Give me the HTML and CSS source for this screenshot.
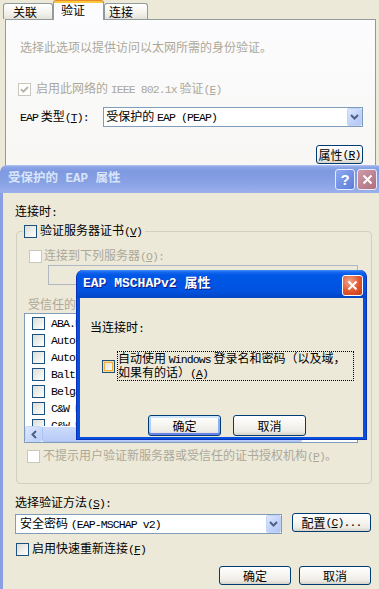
FILE: index.html
```html
<!DOCTYPE html>
<html lang="zh-CN">
<head>
<meta charset="utf-8">
<title>受保护的 EAP 属性</title>
<link rel="stylesheet" href="styles.css">
</head>
<body>
<div class="desk">

  <div class="sheet">
    <div class="tabs">
      <div class="tab t1">关联</div>
      <div class="tab sel">验证</div>
      <div class="tab t3">连接</div>
    </div>
    <div class="panel">
      <div class="dis intro">选择此选项以提供访问以太网所需的身份验证。</div>
      <div class="crow c-enable">
        <span class="cb off"><svg width="9" height="9" viewBox="0 0 9 9"><path d="M1 4.2 L3.4 6.6 L8 2" fill="none" stroke="#B9B7A9" stroke-width="2"/></svg></span>
        <span class="dis">启用此网络的 <span class="lt">IEEE 802.1x</span> 验证<span class="lt">(<u>E</u>)</span></span>
      </div>
      <div class="eaprow">
        <span class="eaplbl"><span class="lt">EAP</span> 类型<span class="lt">(<u>T</u>):</span></span>
        <div class="combo eapcombo">
          <span class="val">受保护的 <span class="lt">EAP (PEAP)</span></span>
          <span class="dd"><svg width="9" height="6" viewBox="0 0 9 6"><path d="M1 1 L4.5 4.5 L8 1" fill="none" stroke="#4D6185" stroke-width="2"/></svg></span>
        </div>
      </div>
      <div class="prow"><div class="btn bprops">属性<span class="lt">(<u>R</u>)</span></div></div>
    </div>
  </div>

  <div class="win2">
    <div class="w2title">
      <span class="ttext">受保护的 EAP 属性</span>
      <span class="tbtns">
        <span class="tb help">?</span>
        <span class="tb x2"><svg width="11" height="11" viewBox="0 0 11 11"><path d="M1.5 1.5 L9.5 9.5 M9.5 1.5 L1.5 9.5" stroke="#fff" stroke-width="2"/></svg></span>
      </span>
    </div>
    <div class="w2body">
      <div class="txt">连接时<span class="lt">:</span></div>
      <div class="group">
        <div class="ghead"><span class="cb"></span><span>验证服务器证书<span class="lt">(<u>V</u>)</span></span></div>
        <div class="crow g-conn"><span class="cb off"></span><span class="dis">连接到下列服务器<span class="lt">(<u>O</u>):</span></span></div>
        <div class="tinput"></div>
        <div class="dis g-trust">受信任的根证书颁发机构<span class="lt">(<u>R</u>):</span></div>
        <div class="list">
          <div class="items">
            <div class="item"><span class="cb"></span><span class="lt">ABA.ECOM Root CA</span></div>
            <div class="item"><span class="cb"></span><span class="lt">Autoridad Certificadora</span></div>
            <div class="item"><span class="cb"></span><span class="lt">Autoridad Certificadora</span></div>
            <div class="item"><span class="cb"></span><span class="lt">Baltimore EZ by DST</span></div>
            <div class="item"><span class="cb"></span><span class="lt">Belgacom E-Trust Primary CA</span></div>
            <div class="item"><span class="cb"></span><span class="lt">C&amp;W HKT SecureNet CA Class A</span></div>
            <div class="item"><span class="cb"></span><span class="lt">C&amp;W HKT SecureNet CA Class B</span></div>
          </div>
          <div class="hscroll">
            <span class="sbtn"><svg width="6" height="9" viewBox="0 0 6 9"><path d="M5 1 L1.5 4.5 L5 8" fill="none" stroke="#4D6185" stroke-width="2"/></svg></span>
            <span class="thumb"></span>
          </div>
        </div>
        <div class="crow g-noprompt"><span class="cb off"></span><span class="dis">不提示用户验证新服务器或受信任的证书授权机构<span class="lt">(<u>P</u>)</span>。</span></div>
      </div>
      <div class="txt m-sel">选择验证方法<span class="lt">(<u>S</u>):</span></div>
      <div class="selrow">
        <div class="combo mcombo">
          <span class="val">安全密码 <span class="lt">(EAP-MSCHAP v2)</span></span>
          <span class="dd"><svg width="9" height="6" viewBox="0 0 9 6"><path d="M1 1 L4.5 4.5 L8 1" fill="none" stroke="#4D6185" stroke-width="2"/></svg></span>
        </div>
        <div class="btn bcfg">配置<span class="lt">(<u>C</u>)...</span></div>
      </div>
      <div class="crow c-fast"><span class="cb"></span><span>启用快速重新连接<span class="lt">(<u>F</u>)</span></span></div>
      <div class="okrow"><div class="btn bw">确定</div><div class="btn bw">取消</div></div>
    </div>
  </div>

  <div class="win3">
    <div class="w3title">
      <span class="ttext3">EAP MSCHAPv2 属性</span>
      <span class="x3"><svg width="11" height="11" viewBox="0 0 11 11"><path d="M1.5 1.5 L9.5 9.5 M9.5 1.5 L1.5 9.5" stroke="#fff" stroke-width="2"/></svg></span>
    </div>
    <div class="w3body">
      <div class="txt">当连接时<span class="lt">:</span></div>
      <div class="autorow">
        <span class="cb hot"></span>
        <span class="focus">自动使用 <span class="lt">Windows</span> 登录名和密码（以及域，<br>如果有的话）<span class="lt">(<u>A</u>)</span></span>
      </div>
      <div class="w3btns"><div class="btn bw3 def">确定</div><div class="btn bw3">取消</div></div>
    </div>
  </div>

</div>
</body>
</html>
```

FILE: styles.css
```css
* { box-sizing: border-box; }
html, body { margin: 0; padding: 0; }
body {
  background: #ECE9D8;
  font-family: "Noto Sans CJK SC", sans-serif;
  font-size: 12px;
  line-height: 14px;
  color: #000;
}
.desk { position: relative; width: 379px; height: 589px; overflow: hidden; }
.lt {
  font-family: "Liberation Mono", "Noto Sans CJK SC", monospace;
  font-size: 11.5px;
  letter-spacing: -0.9px;
}
u { text-decoration: underline; text-underline-offset: 1px; }
.dis { color: #ACA899; }

/* ---------- back property sheet ---------- */
.sheet { position: absolute; left: 0; top: 0; width: 379px; }
.tabs {
  display: flex;
  align-items: flex-end;
  height: 19px;
  padding-left: 3px;
  position: relative;
  z-index: 1;
}
.tab {
  height: 16px;
  border: 1px solid #919B9C;
  border-bottom: 0;
  border-radius: 3px 3px 0 0;
  background: linear-gradient(#FFFFFF, #F3F2EC 60%, #E3E1D8);
  padding: 1px 0 0 9px;
  line-height: 14px;
  white-space: nowrap;
}
.t1 { width: 50px; }
.t3 { width: 44px; padding-left: 4px; }
.sel {
  width: 51px;
  height: 20px;
  margin-bottom: -1px;
  border-top: 1px solid #E68B2C;
  background: linear-gradient(#FFC83C 0, #FFC83C 2px, #FCFCFE 2px);
  padding: 2px 0 0 7px;
}
.panel {
  margin-left: 5px;
  width: 371px;
  height: 190px;
  border: 1px solid #919B9C;
  background: linear-gradient(#FCFCFE, #F6F5F1);
  padding: 20px 12px 0 14px;
}
.intro { height: 14px; white-space: nowrap; }
.crow { display: flex; align-items: center; height: 14px; gap: 3px; white-space: nowrap; }
.c-enable { margin-top: 28px; margin-left: -2px; gap: 5px; }

.cb {
  width: 13px;
  height: 13px;
  flex: none;
  border: 1px solid #1C5180;
  background: linear-gradient(135deg, #DCDCD7, #FFFFFF);
  display: flex;
  align-items: center;
  justify-content: center;
}
.cb.off { border-color: #CAC8BB; background: #FFFFFF; }
.cb.hot {
  box-shadow: inset 0 0 0 1px #FCD98E, inset 0 0 0 2px #F5B03A;
}

.eaprow { display: flex; align-items: center; margin-top: 11px; }
.eaplbl { width: 84px; white-space: nowrap; }
.combo {
  display: flex;
  align-items: center;
  height: 20px;
  border: 1px solid #7F9DB9;
  background: #FFFFFF;
  padding: 0 0 0 2px;
}
.combo .val { flex: 1; white-space: nowrap; }
.eapcombo { width: 262px; }
.dd {
  width: 15px;
  height: 18px;
  flex: none;
  border: 1px solid #C3D3F7;
  border-radius: 2px;
  background: linear-gradient(135deg, #DDE7FE 0, #C4D5FB 50%, #B2C6F5 100%);
  display: flex;
  align-items: center;
  justify-content: center;
}
.prow { display: flex; justify-content: flex-end; margin-top: 18px; }

.btn {
  display: flex;
  align-items: center;
  justify-content: center;
  border: 1px solid #003C74;
  border-radius: 3px;
  background: linear-gradient(#FFFFFF 0, #F6F5F1 45%, #ECEBE5 80%, #D6D2C6 100%);
  white-space: nowrap;
}
.bprops { width: 47px; height: 19px; }

/* ---------- PEAP properties window ---------- */
.win2 { position: absolute; left: 0; top: 165px; width: 383px; height: 430px; }
.w2title {
  height: 28px;
  display: flex;
  align-items: center;
  padding: 0 6px 0 8px;
  border-radius: 7px 7px 0 0;
  background: linear-gradient(#B3C5F3 0, #8CA5E7 2px, #7E99E0 6px, #89A2E5 18px, #9AB0EB 28px);
}
.ttext {
  font-family: "Liberation Mono", "Noto Sans CJK SC", monospace;
  font-weight: bold;
  font-size: 12.5px;
  color: #D8E4F8;
  white-space: pre;
}
.tbtns { margin-left: auto; display: flex; gap: 2px; }
.tb {
  width: 20px;
  height: 21px;
  border: 1px solid #E6ECFB;
  border-radius: 3px;
  display: flex;
  align-items: center;
  justify-content: center;
}
.help {
  background: linear-gradient(135deg, #8EA9EF, #5B7DDB);
  color: #FFFFFF;
  font: bold 15px "Liberation Sans", sans-serif;
}
.x2 { background: linear-gradient(135deg, #CF9AA8, #AE6E7E); }
.w2body {
  height: 402px;
  border-left: 3px solid #8B9FE2;
  border-right: 3px solid #8B9FE2;
  background: #ECE9D8;
  padding: 11px 9px 0 12px;
}
.txt { height: 14px; white-space: nowrap; }
.group {
  margin-top: 13px;
  margin-left: 1px;
  width: 356px;
  height: 253px;
  border: 1px solid #D0D0BF;
  border-radius: 4px;
}
.ghead {
  display: flex;
  align-items: center;
  gap: 3px;
  width: max-content;
  height: 14px;
  margin: -8px 0 0 6px;
  padding: 0 3px 0 1px;
  background: #ECE9D8;
  white-space: nowrap;
}
.g-conn { margin-top: 11px; padding-left: 12px; gap: 2px; }
.tinput {
  margin: 2px 0 0 31px;
  width: 310px;
  height: 20px;
  border: 1px solid #AEB7C2;
  background: #ECE9D8;
}
.g-trust { margin-top: 12px; padding-left: 11px; height: 14px; white-space: nowrap; }
.list {
  margin: 2px 0 0 7px;
  width: 334px;
  height: 130px;
  border: 1px solid #7F9DB9;
  background: #FFFFFF;
  display: flex;
  flex-direction: column;
}
.items { flex: 1; overflow: hidden; padding-top: 1px; }
.item {
  height: 17px;
  display: flex;
  align-items: center;
  padding-left: 7px;
  gap: 6px;
  white-space: nowrap;
}
.hscroll { height: 16px; display: flex; flex: none; background: #FEFEFB; }
.sbtn {
  width: 17px;
  height: 16px;
  border: 1px solid #C6D6F8;
  border-radius: 2px;
  background: linear-gradient(135deg, #DEE8FE, #BACDF8);
  display: flex;
  align-items: center;
  justify-content: center;
}
.thumb {
  width: 260px;
  border: 1px solid #B0C4F1;
  border-top-color: #FFFFFF;
  border-radius: 2px;
  background: linear-gradient(#CCDBFC, #B8CBF7);
}
.g-noprompt { margin-top: 6px; padding-left: 10px; gap: 3px; }
.m-sel { margin-top: 11px; }
.selrow { display: flex; align-items: flex-start; margin-top: 4px; }
.mcombo { width: 267px; margin-top: 1px; padding-left: 4px; }
.bcfg { width: 79px; height: 19px; margin-left: 10px; }
.c-fast { margin-top: 8px; margin-left: 1px; }
.okrow { display: flex; justify-content: flex-end; gap: 8px; margin-top: 10px; }
.bw { width: 72px; height: 19px; }

/* ---------- MSCHAPv2 window ---------- */
.win3 {
  position: absolute;
  left: 76px;
  top: 270px;
  width: 291px;
  height: 170px;
  display: flex;
  flex-direction: column;
  background: #0650E0;
  border: 1px solid #0830B8;
  border-top: 0;
  border-radius: 7px 7px 0 0;
}
.w3title {
  height: 28px;
  flex: none;
  display: flex;
  align-items: center;
  padding: 0 3px 0 6px;
  border-radius: 7px 7px 0 0;
  background: linear-gradient(#3D8EFA 0, #1A69EE 2px, #0058E6 5px, #0055E4 14px, #0051DD 22px, #0044C4 28px);
}
.ttext3 {
  font-family: "Liberation Mono", "Noto Sans CJK SC", monospace;
  font-weight: bold;
  font-size: 13px;
  color: #FFFFFF;
  text-shadow: 1px 1px #0A1A8A;
  white-space: pre;
}
.x3 {
  margin-left: auto;
  margin-top: 2px;
  width: 21px;
  height: 21px;
  border: 1px solid #FFFFFF;
  border-radius: 3px;
  background: radial-gradient(circle at 35% 30%, #F1A88C, #E0552F 55%, #C43A1A);
  display: flex;
  align-items: center;
  justify-content: center;
}
.w3body {
  flex: 1;
  margin: 0 3px 2px 3px;
  background: #ECE9D8;
  padding: 22px 0 0 10px;
}
.autorow { display: flex; align-items: center; gap: 2px; margin: 17px 0 0 12px; }
.focus {
  border: 1px dotted #000000;
  width: 237px;
  line-height: 12px;
  white-space: nowrap;
}
.w3btns { display: flex; gap: 12px; margin: 34px 0 0 58px; }
.bw3 { width: 73px; height: 21px; }
.def {
  box-shadow: inset 0 2px #CEE7FF, inset 0 -2px #6982EE, inset 2px 0 #B2CFFB, inset -2px 0 #8EAEF3;
}
```
